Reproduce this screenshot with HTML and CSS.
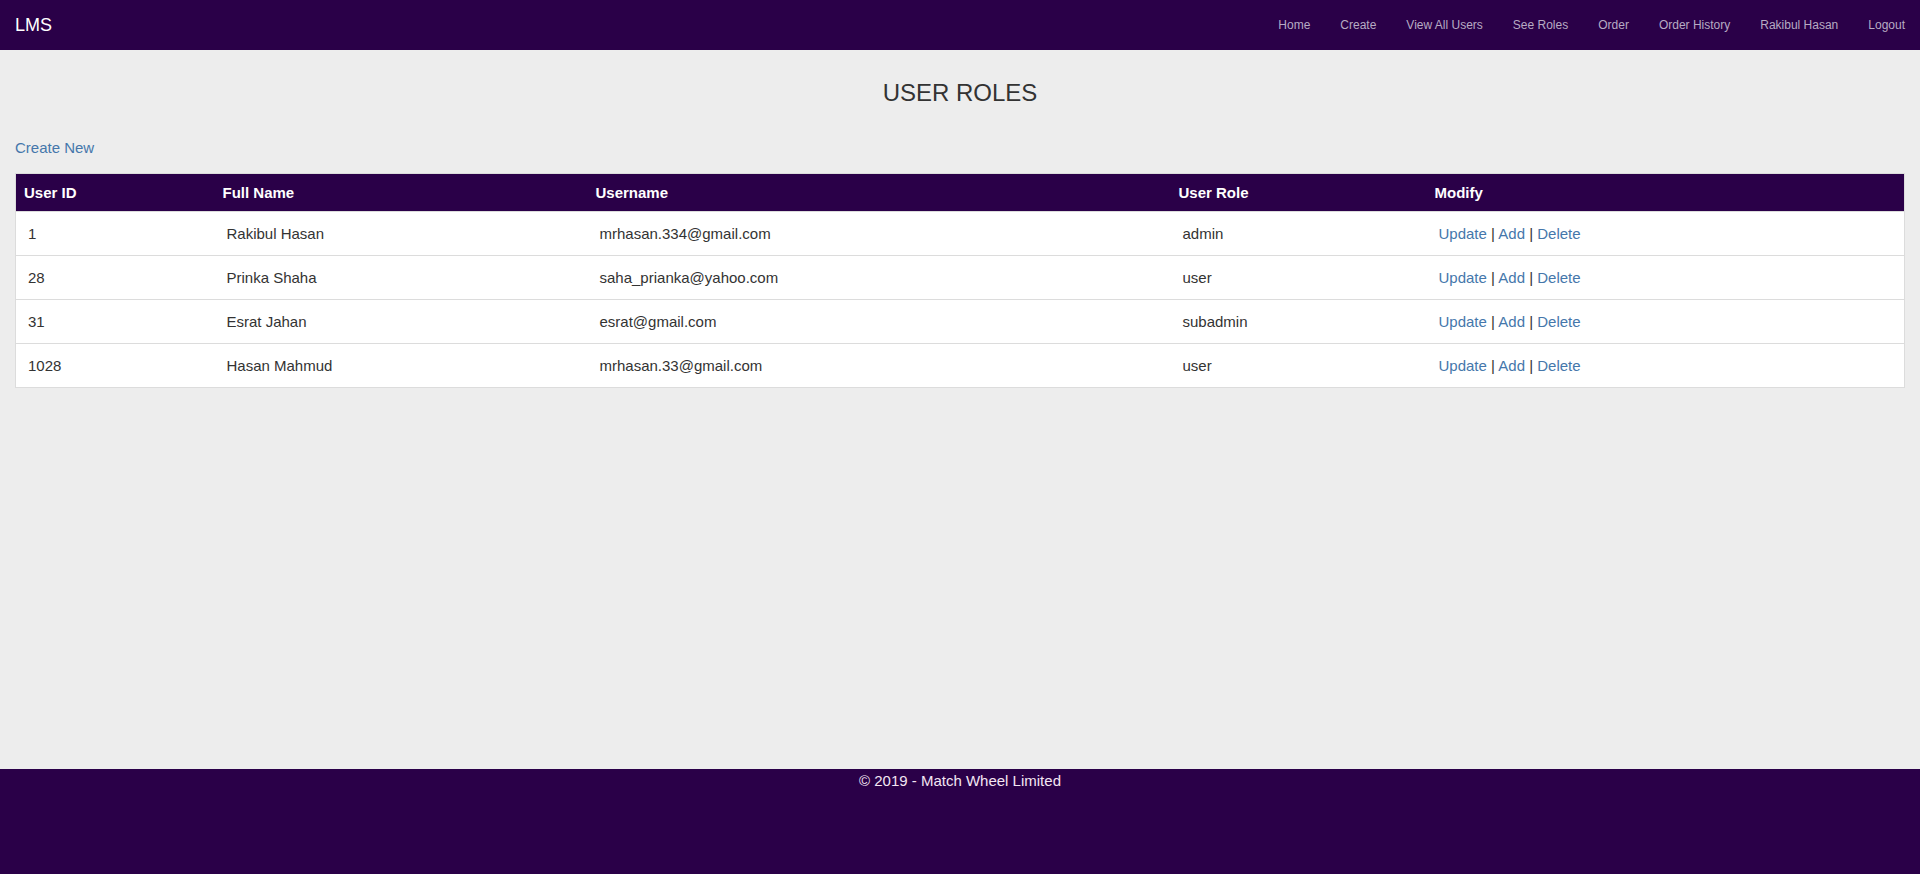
FILE: index.html
```html
<!DOCTYPE html>
<html lang="en">
<head>
<meta charset="utf-8">
<title>User Roles - LMS</title>
<link rel="stylesheet" href="styles.css">
</head>
<body>
<nav class="navbar">
  <a class="brand" href="#">LMS</a>
  <ul class="nav-links">
    <li><a href="#">Home</a></li>
    <li><a href="#">Create</a></li>
    <li><a href="#">View All Users</a></li>
    <li><a href="#">See Roles</a></li>
    <li><a href="#">Order</a></li>
    <li><a href="#">Order History</a></li>
    <li><a href="#">Rakibul Hasan</a></li>
    <li><a href="#">Logout</a></li>
  </ul>
</nav>
<main class="content">
  <h3 class="page-title">USER ROLES</h3>
  <p class="actions"><a class="link" href="#">Create New</a></p>
  <table class="roles-table">
    <colgroup>
      <col class="col-id">
      <col class="col-name">
      <col class="col-user">
      <col class="col-role">
      <col class="col-mod">
    </colgroup>
    <thead>
      <tr>
        <th>User ID</th>
        <th>Full Name</th>
        <th>Username</th>
        <th>User Role</th>
        <th>Modify</th>
      </tr>
    </thead>
    <tbody>
      <tr>
        <td>1</td>
        <td>Rakibul Hasan</td>
        <td>mrhasan.334@gmail.com</td>
        <td>admin</td>
        <td><a class="link" href="#">Update</a> | <a class="link" href="#">Add</a> | <a class="link" href="#">Delete</a></td>
      </tr>
      <tr>
        <td>28</td>
        <td>Prinka Shaha</td>
        <td>saha_prianka@yahoo.com</td>
        <td>user</td>
        <td><a class="link" href="#">Update</a> | <a class="link" href="#">Add</a> | <a class="link" href="#">Delete</a></td>
      </tr>
      <tr>
        <td>31</td>
        <td>Esrat Jahan</td>
        <td>esrat@gmail.com</td>
        <td>subadmin</td>
        <td><a class="link" href="#">Update</a> | <a class="link" href="#">Add</a> | <a class="link" href="#">Delete</a></td>
      </tr>
      <tr>
        <td>1028</td>
        <td>Hasan Mahmud</td>
        <td>mrhasan.33@gmail.com</td>
        <td>user</td>
        <td><a class="link" href="#">Update</a> | <a class="link" href="#">Add</a> | <a class="link" href="#">Delete</a></td>
      </tr>
    </tbody>
  </table>
</main>
<footer class="footer">
  <p class="footer-text">&copy; 2019 - Match Wheel Limited</p>
</footer>
</body>
</html>
```

FILE: styles.css
```css
* { box-sizing: border-box; }

html, body { height: 100%; }

body {
  margin: 0;
  font-family: "Liberation Sans", Arial, sans-serif;
  font-size: 15px;
  line-height: 21px;
  color: #333;
  background: #ededed;
  display: flex;
  flex-direction: column;
  min-height: 100vh;
}

.navbar {
  height: 50px;
  flex: 0 0 50px;
  background: #2a0048;
  display: flex;
  align-items: center;
  justify-content: space-between;
}

.brand {
  padding: 0 15px;
  font-size: 18px;
  line-height: 20px;
  color: #fff;
  text-decoration: none;
}

.nav-links {
  list-style: none;
  margin: 0;
  padding: 0;
  display: flex;
}

.nav-links a {
  display: block;
  padding: 0 15px;
  font-size: 12px;
  line-height: 20px;
  color: #b7abc3;
  text-decoration: none;
}

.content {
  flex: 1;
  padding: 0 15px;
}

.page-title {
  margin: 30px 0 31px;
  font-size: 24px;
  font-weight: normal;
  line-height: 26px;
  text-align: center;
  color: #333;
}

.actions {
  margin: 0 0 15px;
}

.link {
  color: #4577ab;
  text-decoration: none;
}

.roles-table {
  width: 100%;
  border-collapse: collapse;
  table-layout: fixed;
  background: #fff;
  border: 1px solid #dcdcdc;
}

.col-id { width: 199px; }
.col-name { width: 373px; }
.col-user { width: 583px; }
.col-role { width: 256px; }
.col-mod { width: auto; }

.roles-table th {
  background: #2a0048;
  color: #fff;
  font-weight: bold;
  text-align: left;
  padding: 8px 8px;
  line-height: 21px;
}

.roles-table td {
  padding: 11px 12px;
  border-top: 1px solid #dcdcdc;
  color: #333;
  line-height: 21px;
}

.footer {
  flex: 0 0 105px;
  height: 105px;
  background: #2a0048;
}

.footer-text {
  margin: 0;
  padding-top: 2px;
  text-align: center;
  color: #f3e6f3;
  font-size: 15px;
  line-height: 20px;
}
```
